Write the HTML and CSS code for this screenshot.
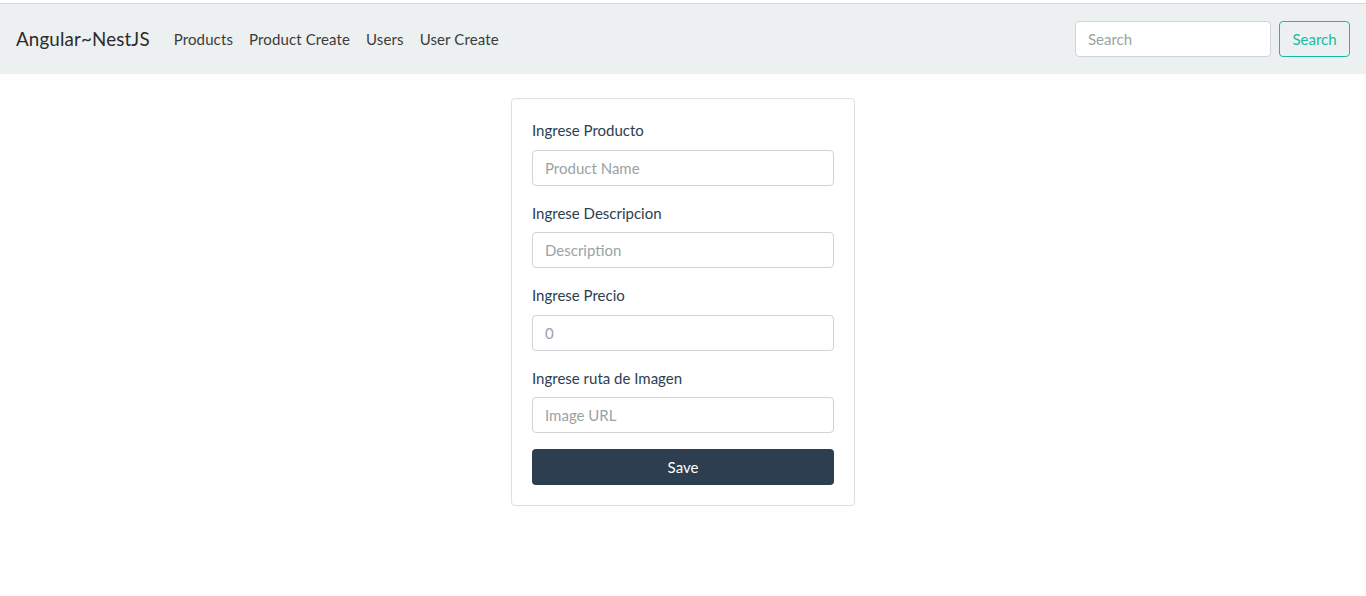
FILE: index.html
```html
<!DOCTYPE html>
<html lang="es">
<head>
<meta charset="utf-8">
<title>Angular~NestJS</title>
<link rel="stylesheet" href="styles.css">
</head>
<body>
<div class="page">
  <nav class="navbar">
    <a class="brand" href="#">Angular~NestJS</a>
    <ul class="nav-links">
      <li><a href="#">Products</a></li>
      <li><a href="#">Product Create</a></li>
      <li><a href="#">Users</a></li>
      <li><a href="#">User Create</a></li>
    </ul>
    <form class="search-form">
      <input class="search-input" type="text" placeholder="Search">
      <button class="search-btn" type="button">Search</button>
    </form>
  </nav>
  <main class="main">
    <div class="card">
      <div class="form-group">
        <label>Ingrese Producto</label>
        <input class="form-control" type="text" placeholder="Product Name">
      </div>
      <div class="form-group">
        <label>Ingrese Descripcion</label>
        <input class="form-control" type="text" placeholder="Description">
      </div>
      <div class="form-group">
        <label>Ingrese Precio</label>
        <input class="form-control" type="text" placeholder="0">
      </div>
      <div class="form-group">
        <label>Ingrese ruta de Imagen</label>
        <input class="form-control" type="text" placeholder="Image URL">
      </div>
      <button class="save-btn" type="button">Save</button>
    </div>
  </main>
</div>
</body>
</html>
```

FILE: styles.css
```css
* { box-sizing: border-box; }
html, body {
  margin: 0;
  padding: 0;
  background: #fff;
}
body {
  font-family: Lato, "Liberation Sans", sans-serif;
  font-size: 15px;
  line-height: 1.5;
  color: #2c3e50;
}
.page {
  padding-top: 3px;
}
.navbar {
  display: flex;
  align-items: center;
  background: #ecf0f1;
  border-top: 1px solid #d3d7d8;
  padding: 16px 16px 16px 16px;
  height: 71px;
}
.brand {
  font-size: 18.75px;
  color: #2b2b2b;
  text-decoration: none;
  margin-right: 16px;
  line-height: 1.5;
  letter-spacing: 0.15px;
}
.nav-links {
  display: flex;
  list-style: none;
  margin: 0;
  padding: 0;
}
.nav-links a {
  display: block;
  padding: 8px 8px;
  color: #3b3b3b;
  text-decoration: none;
  letter-spacing: 0.12px;
}
.search-form {
  margin-left: auto;
  display: flex;
  gap: 8px;
}
.search-input {
  width: 196px;
  height: 36px;
  border: 1px solid #ced4da;
  border-radius: 4px;
  padding: 6px 12px;
  font: inherit;
  color: #2c3e50;
  background: #fff;
}
.search-input::placeholder { color: #9aa3a4; }
.search-btn {
  width: 71px;
  height: 36px;
  border: 1px solid #18bc9c;
  border-radius: 4px;
  background: transparent;
  color: #18bc9c;
  font: inherit;
  padding: 0;
}
.main {
  display: flex;
  justify-content: center;
  padding-top: 24px;
}
.card {
  width: 344px;
  border: 1px solid #dfdfdf;
  border-radius: 4px;
  padding: 20px;
  display: flex;
  flex-direction: column;
}
.form-group {
  display: flex;
  flex-direction: column;
  margin-bottom: 16px;
}
.form-group label {
  margin-bottom: 8px;
  line-height: 22.5px;
}
.form-control {
  height: 36px;
  border: 1px solid #ced4da;
  border-radius: 4px;
  padding: 6px 12px;
  font: inherit;
  color: #2c3e50;
  background: #fff;
}
.form-control::placeholder { color: #9aa3a4; }
.save-btn {
  height: 36px;
  border: none;
  border-radius: 4px;
  background: #2c3e50;
  color: #fff;
  font: inherit;
}
```
